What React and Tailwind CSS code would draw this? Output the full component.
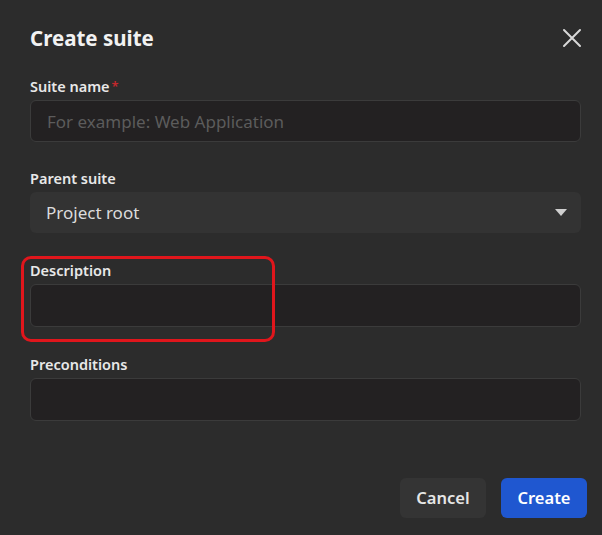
import React from "react";

const font = { fontFamily: '"Noto Sans", "Open Sans", sans-serif' };

const labelClass = "text-[14.5px] leading-5 font-semibold text-[#e8e8e8]";
const inputClass =
    "w-full rounded-md bg-[#232122] border border-[#3b3b3b] px-4 text-[17px] text-[#ddd] outline-none placeholder:text-[#5c5c5c]";

const Field = ({ label, required, className = "", children }) => (
    <div className={`flex flex-col gap-1 ${className}`}>
        <p className={labelClass}>
            {label}
            {required && <span className="text-[#c4282c] text-[13px] align-top ml-0.5">*</span>}
        </p>
        {children}
    </div>
);

export default function App() {
    return (
        <div
            className="relative w-[602px] h-[535px] bg-[#2c2c2c] overflow-hidden"
            style={font}
        >
            <div className="flex items-center justify-between pl-[30px] pr-[20px] pt-[24px] h-[52px]">
                <h1 className="text-[20.5px] leading-7 font-bold text-[#f2f2f2]">Create suite</h1>
                <svg width="20" height="20" viewBox="0 0 20 20" className="text-[#d8d8d8]">
                    <path d="M2 2 L18 18 M18 2 L2 18" stroke="currentColor" strokeWidth="2" strokeLinecap="round" />
                </svg>
            </div>

            <div className="flex flex-col pl-[30px] pr-[21px] mt-[24px]">
                <Field label="Suite name" required>
                    <input className={`${inputClass} h-[42px]`} placeholder="For example: Web Application" />
                </Field>
                <Field label="Parent suite" className="mt-[26px]">
                    <div className="w-full h-[41px] rounded-md bg-[#333333] pl-4 pr-[14px] flex items-center justify-between">
                        <span className="text-[17px] text-[#dcdcdc]">Project root</span>
                        <svg width="12" height="7" viewBox="0 0 12 7">
                            <path d="M0 0 H12 L6 7 Z" fill="#cfcfcf" />
                        </svg>
                    </div>
                </Field>
                <Field label="Description" className="mt-[27px]">
                    <input className={`${inputClass} h-[43px]`} />
                </Field>
                <Field label="Preconditions" className="mt-[27px]">
                    <input className={`${inputClass} h-[43px]`} />
                </Field>
            </div>

            <div className="flex justify-end gap-[15px] pr-[15px] mt-[57px]">
                <button className="w-[86px] h-[40px] rounded-md bg-[#343434] text-[16.5px] font-semibold text-[#e6e6e6]">
                    Cancel
                </button>
                <button className="w-[86px] h-[40px] rounded-md bg-[#1f57d0] text-[16.5px] font-semibold text-white">
                    Create
                </button>
            </div>

            <div className="absolute left-[21px] top-[256px] w-[254px] h-[86px] rounded-[10px] border-[3px] border-[#e0161c] pointer-events-none" />
        </div>
    );
}
